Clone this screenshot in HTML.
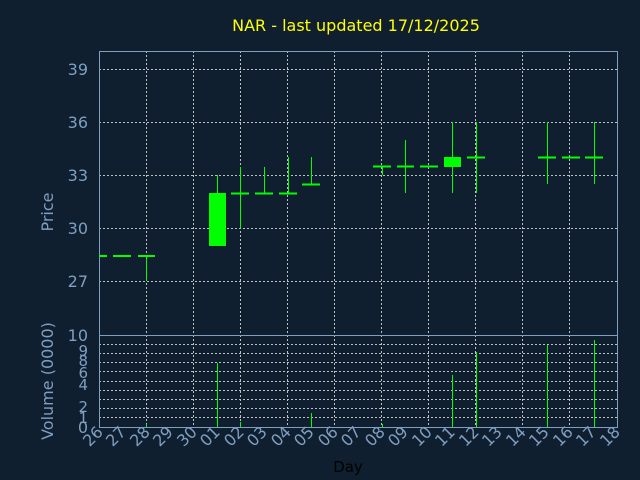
<!DOCTYPE html>
<html><head><style>body{margin:0;background:#0f1f30;}svg{display:block}</style></head><body>
<svg width="640" height="480" xmlns="http://www.w3.org/2000/svg" font-family="DejaVu Sans, Liberation Sans, sans-serif">
<rect width="640" height="480" fill="#0f1f30"/>
<text x="356" y="31" fill="#ffff00" font-size="16" text-anchor="middle">NAR - last updated 17/12/2025</text>
<g stroke="#c0c0c0" stroke-width="1" stroke-dasharray="2,2">
<path d="M99 69.5H617M99 122.5H617M99 175.5H617M99 228.5H617M99 281.5H617"/>
<path d="M146.5 51V427M193.5 51V427M240.5 51V427M287.5 51V427M334.5 51V427M381.5 51V427M428.5 51V427M475.5 51V427M522.5 51V427M569.5 51V427"/>
<path d="M99 344.5H617M99 353.5H617M99 362.5H617M99 371.5H617M99 381.5H617M99 390.5H617M99 399.5H617M99 408.5H617M99 417.5H617"/>
</g>
<g fill="none" stroke="#7f9fc0" stroke-width="1">
<rect x="99.5" y="51.5" width="518" height="376"/>
<path d="M99 335.5H617"/>
</g>
<g fill="#7f9fc0" font-size="16" text-anchor="end">
<text x="88" y="75">39</text><text x="88" y="128">36</text><text x="88" y="181">33</text><text x="88" y="234">30</text><text x="88" y="287">27</text>
<text x="88" y="341">10</text><text x="88" y="433">0</text>
<text x="88" y="356" font-size="15">9</text><text x="88" y="366" font-size="15">8</text><text x="88" y="378" font-size="15">6</text><text x="88" y="390" font-size="15">4</text><text x="88" y="412" font-size="15">2</text><text x="88" y="423" font-size="15">1</text>
<text transform="translate(53,212) rotate(-90)" text-anchor="middle">Price</text>
<text transform="translate(53,381) rotate(-90)" text-anchor="middle">Volume (0000)</text>
</g>
<text x="348" y="472" fill="#000" font-size="15" text-anchor="middle">Day</text>
<g fill="#7f9fc0" font-size="16" text-anchor="end">
<text transform="translate(104,433) rotate(-45)">26</text>
<text transform="translate(127,433) rotate(-45)">27</text>
<text transform="translate(151,433) rotate(-45)">28</text>
<text transform="translate(174,433) rotate(-45)">29</text>
<text transform="translate(198,433) rotate(-45)">30</text>
<text transform="translate(221,433) rotate(-45)">01</text>
<text transform="translate(245,433) rotate(-45)">02</text>
<text transform="translate(268,433) rotate(-45)">03</text>
<text transform="translate(292,433) rotate(-45)">04</text>
<text transform="translate(315,433) rotate(-45)">05</text>
<text transform="translate(339,433) rotate(-45)">06</text>
<text transform="translate(362,433) rotate(-45)">07</text>
<text transform="translate(386,433) rotate(-45)">08</text>
<text transform="translate(409,433) rotate(-45)">09</text>
<text transform="translate(433,433) rotate(-45)">10</text>
<text transform="translate(456,433) rotate(-45)">11</text>
<text transform="translate(480,433) rotate(-45)">12</text>
<text transform="translate(503,433) rotate(-45)">13</text>
<text transform="translate(527,433) rotate(-45)">14</text>
<text transform="translate(550,433) rotate(-45)">15</text>
<text transform="translate(574,433) rotate(-45)">16</text>
<text transform="translate(597,433) rotate(-45)">17</text>
<text transform="translate(621,433) rotate(-45)">18</text>
</g>
<g stroke="#00ff00" stroke-width="1" fill="none">
<path d="M146.5 256V281M217.5 175V193M240.5 167V228M264.5 167V193M288.5 157V193M311.5 157V184M382.5 166V175M405.5 140V193M452.5 122V193M476.5 122V193M547.5 122V184M594.5 122V184"/>
</g>
<g stroke="#00ff00" stroke-width="2" fill="none">
<path d="M99 256H107M113 256H131M138 256H155M231 193.5H249M255 193.5H273M279 193.5H297M302 184.5H320M373 166.5H391M397 166.5H414M420 166.5H438M467 157.5H485M538 157.5H556M562 157.5H580M585 157.5H603"/>
</g>
<g fill="#00ff00">
<rect x="209" y="193" width="17" height="53"/>
<rect x="444" y="157" width="17" height="10"/>
</g>
<g stroke="#00ff00" stroke-width="1">
<path d="M217.5 427V363M240.5 427V422M146.5 427V424M311.5 427V413M452.5 427V375M476.5 427V352M547.5 427V345M594.5 427V340M382.5 427V424"/>
</g>
</svg>
</body></html>
